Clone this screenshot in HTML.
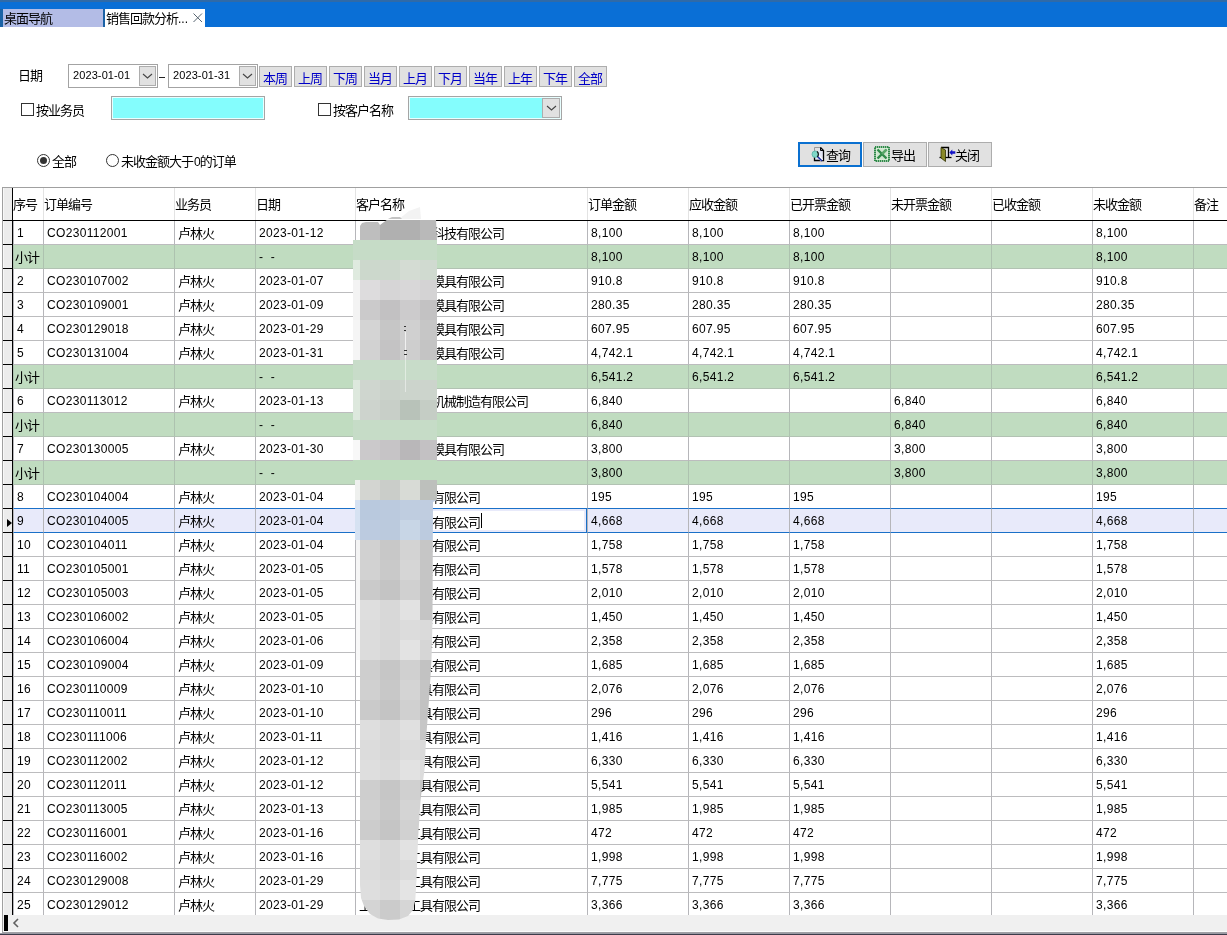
<!DOCTYPE html>
<html lang="zh-CN">
<head>
<meta charset="utf-8">
<title>销售回款分析</title>
<style>
*{box-sizing:border-box;margin:0;padding:0}
html,body{width:1227px;height:935px;overflow:hidden;background:#fff}
body{will-change:transform;position:relative;font-family:"Liberation Sans","Noto Sans CJK SC",sans-serif;font-size:12px;color:#000;line-height:1}
.abs{position:absolute}
#topbar{position:absolute;left:0;top:0;width:1227px;height:27px;background:#0a6fd6}
#topbar .edge{position:absolute;left:0;top:0;width:100%;height:2px;background:#2f6aa8}
#topbar .g1{position:absolute;left:0;top:9px;width:3px;height:18px;background:#1a62a6}
#topbar .g2{position:absolute;left:103px;top:9px;width:2px;height:18px;background:#1a62a6}
.tab{position:absolute;top:9px;height:18px;font-size:13px;letter-spacing:-1px;line-height:19px;padding-left:1px;white-space:nowrap}
#tab1{left:3px;width:100px;background:#b3bce6}
#tab2{left:105px;width:100px;background:#fff}
#tab2 svg{position:absolute;left:88px;top:4px}
.lbl{position:absolute;font-size:13px;letter-spacing:-1px;line-height:14px;white-space:nowrap}
.dt{position:absolute;top:64px;width:90px;height:24px;border:1px solid #a3a3a3;background:#fff;font-size:11px;letter-spacing:0.1px;line-height:21px;padding-left:4px}
.dt .dd{position:absolute;right:1px;top:1px;width:17px;height:20px;background:#e1e1e1;border:1px solid #adadad}
.dt .dd svg{position:absolute;left:2px;top:6px}
.qb{position:absolute;top:66px;width:33px;height:21px;background:#e1e1e1;border:1px solid #adadad;color:#0000c8;font-size:13px;letter-spacing:-1px;line-height:24px;text-align:center;white-space:nowrap;padding-right:1px}
.chk{position:absolute;width:13px;height:13px;border:1px solid #333;background:#fff}
.cy{position:absolute;top:96px;height:24px;background:#84fdfd;border:1px solid #a5a5a5;box-shadow:inset 0 0 0 1px #e8ffff}
.rad{position:absolute;top:154px;width:13px;height:13px;border:1px solid #333;border-radius:50%;background:#fff}
.rad.on:after{content:"";position:absolute;left:2px;top:2px;width:7px;height:7px;border-radius:50%;background:#333}
.btn{position:absolute;top:142px;height:25px;background:#e1e1e1;border:1px solid #adadad;font-size:13px;letter-spacing:-1px;line-height:24px;white-space:nowrap}
.btn span{position:absolute;top:1px}
.btn svg{position:absolute}
/* grid */
#grid{position:absolute;left:0;top:0;width:1227px;height:935px;overflow:hidden;pointer-events:none}
.hdr{position:absolute;left:13px;top:188px;width:1214px;height:33px;border-bottom:1px solid #000;background:#fff;z-index:2}
.hc{position:absolute;top:0;height:32px;line-height:33px;font-size:13px;letter-spacing:-1px;border-left:1px solid #e3e3e3;white-space:nowrap;overflow:hidden;margin-left:-13px}
.row{position:absolute;left:0;width:1227px;height:24px}
.row .c{position:absolute;top:0;height:24px;border-left:1px solid #b6b6ba;border-bottom:1px solid #bcbcbe;font-size:12px;letter-spacing:0.33px;line-height:24px;padding-left:3px;white-space:nowrap;overflow:hidden}
.row.sub .c{background:#c0dcc0;border-left-color:#adc2af;border-bottom-color:#b2c2b3}
.row .c b{font-weight:normal;font-size:13px;letter-spacing:-1px;position:relative;top:1px}
.hc:first-child{border-left:none;padding-left:0}
.row .c.z{padding-left:1px}
.tk{position:absolute;left:3px;top:23px;width:9px;height:1px;background:#000}
.row.sel{margin-top:-1px;height:25px}
.row.sel .tk{top:24px}
.row.sel .c{height:25px;background:#e8eafa;border-top:1px solid #1a70c8;border-bottom:1px solid #1a70c8}
.row.sel .c.ed{background:#fff;border:1px solid #1a70c8;box-shadow:inset 0 0 0 2px #e8eafa}
.row.sel .c.ed span{top:2px}
.cur{position:absolute;left:125px;top:4px;width:1px;height:15px;background:#000}
.mk{position:absolute;left:7px;top:11px;width:0;height:0;border-left:5px solid #000;border-top:4px solid transparent;border-bottom:4px solid transparent}
.c.nm span{position:absolute;top:1px;font-size:13px;letter-spacing:-1px}
</style>
</head>
<body>
<div id="topbar"><div class="edge"></div><div class="g1"></div><div class="g2"></div>
<div class="tab" id="tab1">桌面导航</div>
<div class="tab" id="tab2">销售回款分析<span style="letter-spacing:0;font-size:12px">...</span><svg width="10" height="10" viewBox="0 0 10 10"><path d="M0.5 0.5L9 9M9 0.5L0.5 9" stroke="#566470" stroke-width="1" fill="none"/></svg></div>
</div>

<div class="lbl" style="left:18px;top:69px">日期</div>
<div class="dt" style="left:68px">2023-01-01<div class="dd"><svg width="11" height="6" viewBox="0 0 11 6"><path d="M1 1L5.5 5L10 1" stroke="#444" stroke-width="1.1" fill="none"/></svg></div></div>
<div class="abs" style="left:159px;top:77px;width:6px;height:1px;background:#222"></div>
<div class="dt" style="left:168px">2023-01-31<div class="dd"><svg width="11" height="6" viewBox="0 0 11 6"><path d="M1 1L5.5 5L10 1" stroke="#444" stroke-width="1.1" fill="none"/></svg></div></div>
<div class="qb" style="left:259px">本周</div>
<div class="qb" style="left:294px">上周</div>
<div class="qb" style="left:329px">下周</div>
<div class="qb" style="left:364px">当月</div>
<div class="qb" style="left:399px">上月</div>
<div class="qb" style="left:434px">下月</div>
<div class="qb" style="left:469px">当年</div>
<div class="qb" style="left:504px">上年</div>
<div class="qb" style="left:539px">下年</div>
<div class="qb" style="left:574px">全部</div>

<div class="chk" style="left:21px;top:103px"></div>
<div class="lbl" style="left:36px;top:104px">按业务员</div>
<div class="cy" style="left:111px;width:154px"></div>
<div class="chk" style="left:318px;top:103px"></div>
<div class="lbl" style="left:333px;top:104px">按客户名称</div>
<div class="cy" style="left:408px;width:154px"><div class="dd" style="position:absolute;right:1px;top:1px;width:18px;height:20px;background:#e1e1e1;border:1px solid #adadad"><svg style="position:absolute;left:3px;top:6px" width="11" height="6" viewBox="0 0 11 6"><path d="M1 1L5.5 5L10 1" stroke="#444" stroke-width="1.1" fill="none"/></svg></div></div>

<div class="rad on" style="left:37px"></div>
<div class="lbl" style="left:52px;top:155px">全部</div>
<div class="rad" style="left:106px"></div>
<div class="lbl" style="left:121px;top:155px">未收金额大于<span style="letter-spacing:0;font-size:12px;margin:0 -1px 0 1px">0</span>的订单</div>

<div class="btn" style="left:798px;width:64px;border:2px solid #0a70d0;line-height:22px">
<svg style="left:10px;top:2px" width="16" height="17" viewBox="0 0 16 17"><path d="M4.5 7V1.5H10.5" stroke="#9a9a9a" fill="none"/><path d="M10.5 1.5L13.5 4.5V14.5H4.5V11" stroke="#000" stroke-width="1.3" fill="#e4e6f4"/><path d="M10.5 1.5V4.5H13.5" stroke="#000" fill="none"/><path d="M8 10L12 14.5" stroke="#fff" stroke-width="3"/><path d="M7.5 10.5L12 15" stroke="#1828a0" stroke-width="1.6"/><circle cx="5.2" cy="8.2" r="3.2" fill="#80d8c8" stroke="#58b0a8" stroke-width="0.8"/><path d="M7 5.6A3.3 3.3 0 0 1 7.2 10.8" stroke="#111" stroke-width="1.2" fill="none"/></svg>
<span style="left:26px;top:1px">查询</span></div>
<div class="btn" style="left:863px;width:64px">
<svg style="left:10px;top:3px" width="16" height="16" viewBox="0 0 16 16"><rect x="1" y="1" width="14" height="14" fill="#d8ecd8" stroke="#2e8a48" stroke-width="2" stroke-dasharray="1.4 0.6"/><rect x="3" y="3" width="10" height="10" fill="#cfe6cf"/><path d="M3.5 3.5L12.5 12.5M12.5 3.5L3.5 12.5" stroke="#2e8a48" stroke-width="2.4"/><path d="M12.5 3.5L8 8" stroke="#5aa86a" stroke-width="2.4"/></svg>
<span style="left:27px">导出</span></div>
<div class="btn" style="left:928px;width:64px">
<svg style="left:10px;top:3px" width="17" height="16" viewBox="0 0 17 16"><path d="M2 1.5H9.5V11.5" stroke="#000" stroke-width="1.3" fill="none"/><path d="M0.5 11.5H12.5" stroke="#000" stroke-width="1.3"/><path d="M2 1.5L6.5 4V15.5L2 12Z" fill="#8a8a28" stroke="#303000" stroke-width="0.8"/><path d="M10.3 6.5L13.3 3.5V5.3H16.3V7.7H13.3V9.5Z" fill="#1414c8"/></svg>
<span style="left:26px">关闭</span></div>

<!-- grid frame -->
<div class="abs" style="left:2px;top:187px;width:1225px;height:1px;background:#a0a0a0"></div>
<div class="abs" style="left:2px;top:187px;width:1px;height:746px;background:#a0a0a0"></div>
<div class="abs" style="left:3px;top:188px;width:9px;height:727px;background:#ececec;box-shadow:inset 1px 0 0 #f8f8f8"></div>
<div class="abs" style="left:3px;top:220px;width:10px;height:1px;background:#000"></div>
<div id="grid">
<div class="hdr">
<div class="hc" style="left:13px;width:30px">序号</div>
<div class="hc" style="left:43px;width:131px">订单编号</div>
<div class="hc" style="left:174px;width:81px">业务员</div>
<div class="hc" style="left:255px;width:100px">日期</div>
<div class="hc" style="left:355px;width:232px">客户名称</div>
<div class="hc" style="left:587px;width:101px">订单金额</div>
<div class="hc" style="left:688px;width:101px">应收金额</div>
<div class="hc" style="left:789px;width:101px">已开票金额</div>
<div class="hc" style="left:890px;width:101px">未开票金额</div>
<div class="hc" style="left:991px;width:101px">已收金额</div>
<div class="hc" style="left:1092px;width:101px">未收金额</div>
<div class="hc" style="left:1193px;width:101px">备注</div>
</div>
<div class="row" style="top:221px"><i class="tk"></i>
<div class="c" style="left:13px;width:30px">1</div>
<div class="c" style="left:43px;width:131px">CO230112001</div>
<div class="c" style="left:174px;width:81px"><b>卢林火</b></div>
<div class="c" style="left:255px;width:100px">2023-01-12</div>
<div class="c nm" style="left:355px;width:232px"><span style="left:76px">科技有限公司</span></div>
<div class="c" style="left:587px;width:101px">8,100</div>
<div class="c" style="left:688px;width:101px">8,100</div>
<div class="c" style="left:789px;width:101px">8,100</div>
<div class="c" style="left:890px;width:101px"></div>
<div class="c" style="left:991px;width:101px"></div>
<div class="c" style="left:1092px;width:101px">8,100</div>
<div class="c" style="left:1193px;width:101px"></div>
</div>
<div class="row sub" style="top:245px"><i class="tk"></i>
<div class="c z" style="left:13px;width:30px"><b>小计</b></div>
<div class="c" style="left:43px;width:131px"></div>
<div class="c" style="left:174px;width:81px"></div>
<div class="c" style="left:255px;width:100px">-&nbsp;&nbsp;-</div>
<div class="c" style="left:355px;width:232px"></div>
<div class="c" style="left:587px;width:101px">8,100</div>
<div class="c" style="left:688px;width:101px">8,100</div>
<div class="c" style="left:789px;width:101px">8,100</div>
<div class="c" style="left:890px;width:101px"></div>
<div class="c" style="left:991px;width:101px"></div>
<div class="c" style="left:1092px;width:101px">8,100</div>
<div class="c" style="left:1193px;width:101px"></div>
</div>
<div class="row" style="top:269px"><i class="tk"></i>
<div class="c" style="left:13px;width:30px">2</div>
<div class="c" style="left:43px;width:131px">CO230107002</div>
<div class="c" style="left:174px;width:81px"><b>卢林火</b></div>
<div class="c" style="left:255px;width:100px">2023-01-07</div>
<div class="c nm" style="left:355px;width:232px"><span style="left:76px">模具有限公司</span></div>
<div class="c" style="left:587px;width:101px">910.8</div>
<div class="c" style="left:688px;width:101px">910.8</div>
<div class="c" style="left:789px;width:101px">910.8</div>
<div class="c" style="left:890px;width:101px"></div>
<div class="c" style="left:991px;width:101px"></div>
<div class="c" style="left:1092px;width:101px">910.8</div>
<div class="c" style="left:1193px;width:101px"></div>
</div>
<div class="row" style="top:293px"><i class="tk"></i>
<div class="c" style="left:13px;width:30px">3</div>
<div class="c" style="left:43px;width:131px">CO230109001</div>
<div class="c" style="left:174px;width:81px"><b>卢林火</b></div>
<div class="c" style="left:255px;width:100px">2023-01-09</div>
<div class="c nm" style="left:355px;width:232px"><span style="left:76px">模具有限公司</span></div>
<div class="c" style="left:587px;width:101px">280.35</div>
<div class="c" style="left:688px;width:101px">280.35</div>
<div class="c" style="left:789px;width:101px">280.35</div>
<div class="c" style="left:890px;width:101px"></div>
<div class="c" style="left:991px;width:101px"></div>
<div class="c" style="left:1092px;width:101px">280.35</div>
<div class="c" style="left:1193px;width:101px"></div>
</div>
<div class="row" style="top:317px"><i class="tk"></i>
<div class="c" style="left:13px;width:30px">4</div>
<div class="c" style="left:43px;width:131px">CO230129018</div>
<div class="c" style="left:174px;width:81px"><b>卢林火</b></div>
<div class="c" style="left:255px;width:100px">2023-01-29</div>
<div class="c nm" style="left:355px;width:232px"><span style="left:76px">模具有限公司</span></div>
<div class="c" style="left:587px;width:101px">607.95</div>
<div class="c" style="left:688px;width:101px">607.95</div>
<div class="c" style="left:789px;width:101px">607.95</div>
<div class="c" style="left:890px;width:101px"></div>
<div class="c" style="left:991px;width:101px"></div>
<div class="c" style="left:1092px;width:101px">607.95</div>
<div class="c" style="left:1193px;width:101px"></div>
</div>
<div class="row" style="top:341px"><i class="tk"></i>
<div class="c" style="left:13px;width:30px">5</div>
<div class="c" style="left:43px;width:131px">CO230131004</div>
<div class="c" style="left:174px;width:81px"><b>卢林火</b></div>
<div class="c" style="left:255px;width:100px">2023-01-31</div>
<div class="c nm" style="left:355px;width:232px"><span style="left:76px">模具有限公司</span></div>
<div class="c" style="left:587px;width:101px">4,742.1</div>
<div class="c" style="left:688px;width:101px">4,742.1</div>
<div class="c" style="left:789px;width:101px">4,742.1</div>
<div class="c" style="left:890px;width:101px"></div>
<div class="c" style="left:991px;width:101px"></div>
<div class="c" style="left:1092px;width:101px">4,742.1</div>
<div class="c" style="left:1193px;width:101px"></div>
</div>
<div class="row sub" style="top:365px"><i class="tk"></i>
<div class="c z" style="left:13px;width:30px"><b>小计</b></div>
<div class="c" style="left:43px;width:131px"></div>
<div class="c" style="left:174px;width:81px"></div>
<div class="c" style="left:255px;width:100px">-&nbsp;&nbsp;-</div>
<div class="c" style="left:355px;width:232px"></div>
<div class="c" style="left:587px;width:101px">6,541.2</div>
<div class="c" style="left:688px;width:101px">6,541.2</div>
<div class="c" style="left:789px;width:101px">6,541.2</div>
<div class="c" style="left:890px;width:101px"></div>
<div class="c" style="left:991px;width:101px"></div>
<div class="c" style="left:1092px;width:101px">6,541.2</div>
<div class="c" style="left:1193px;width:101px"></div>
</div>
<div class="row" style="top:389px"><i class="tk"></i>
<div class="c" style="left:13px;width:30px">6</div>
<div class="c" style="left:43px;width:131px">CO230113012</div>
<div class="c" style="left:174px;width:81px"><b>卢林火</b></div>
<div class="c" style="left:255px;width:100px">2023-01-13</div>
<div class="c nm" style="left:355px;width:232px"><span style="left:76px">机械制造有限公司</span></div>
<div class="c" style="left:587px;width:101px">6,840</div>
<div class="c" style="left:688px;width:101px"></div>
<div class="c" style="left:789px;width:101px"></div>
<div class="c" style="left:890px;width:101px">6,840</div>
<div class="c" style="left:991px;width:101px"></div>
<div class="c" style="left:1092px;width:101px">6,840</div>
<div class="c" style="left:1193px;width:101px"></div>
</div>
<div class="row sub" style="top:413px"><i class="tk"></i>
<div class="c z" style="left:13px;width:30px"><b>小计</b></div>
<div class="c" style="left:43px;width:131px"></div>
<div class="c" style="left:174px;width:81px"></div>
<div class="c" style="left:255px;width:100px">-&nbsp;&nbsp;-</div>
<div class="c" style="left:355px;width:232px"></div>
<div class="c" style="left:587px;width:101px">6,840</div>
<div class="c" style="left:688px;width:101px"></div>
<div class="c" style="left:789px;width:101px"></div>
<div class="c" style="left:890px;width:101px">6,840</div>
<div class="c" style="left:991px;width:101px"></div>
<div class="c" style="left:1092px;width:101px">6,840</div>
<div class="c" style="left:1193px;width:101px"></div>
</div>
<div class="row" style="top:437px"><i class="tk"></i>
<div class="c" style="left:13px;width:30px">7</div>
<div class="c" style="left:43px;width:131px">CO230130005</div>
<div class="c" style="left:174px;width:81px"><b>卢林火</b></div>
<div class="c" style="left:255px;width:100px">2023-01-30</div>
<div class="c nm" style="left:355px;width:232px"><span style="left:76px">模具有限公司</span></div>
<div class="c" style="left:587px;width:101px">3,800</div>
<div class="c" style="left:688px;width:101px"></div>
<div class="c" style="left:789px;width:101px"></div>
<div class="c" style="left:890px;width:101px">3,800</div>
<div class="c" style="left:991px;width:101px"></div>
<div class="c" style="left:1092px;width:101px">3,800</div>
<div class="c" style="left:1193px;width:101px"></div>
</div>
<div class="row sub" style="top:461px"><i class="tk"></i>
<div class="c z" style="left:13px;width:30px"><b>小计</b></div>
<div class="c" style="left:43px;width:131px"></div>
<div class="c" style="left:174px;width:81px"></div>
<div class="c" style="left:255px;width:100px">-&nbsp;&nbsp;-</div>
<div class="c" style="left:355px;width:232px"></div>
<div class="c" style="left:587px;width:101px">3,800</div>
<div class="c" style="left:688px;width:101px"></div>
<div class="c" style="left:789px;width:101px"></div>
<div class="c" style="left:890px;width:101px">3,800</div>
<div class="c" style="left:991px;width:101px"></div>
<div class="c" style="left:1092px;width:101px">3,800</div>
<div class="c" style="left:1193px;width:101px"></div>
</div>
<div class="row" style="top:485px"><i class="tk"></i>
<div class="c" style="left:13px;width:30px">8</div>
<div class="c" style="left:43px;width:131px">CO230104004</div>
<div class="c" style="left:174px;width:81px"><b>卢林火</b></div>
<div class="c" style="left:255px;width:100px">2023-01-04</div>
<div class="c nm" style="left:355px;width:232px"><span style="left:52px">工具有限公司</span></div>
<div class="c" style="left:587px;width:101px">195</div>
<div class="c" style="left:688px;width:101px">195</div>
<div class="c" style="left:789px;width:101px">195</div>
<div class="c" style="left:890px;width:101px"></div>
<div class="c" style="left:991px;width:101px"></div>
<div class="c" style="left:1092px;width:101px">195</div>
<div class="c" style="left:1193px;width:101px"></div>
</div>
<div class="row sel" style="top:509px"><i class="tk"></i>
<i class="mk"></i>
<div class="c" style="left:13px;width:30px">9</div>
<div class="c" style="left:43px;width:131px">CO230104005</div>
<div class="c" style="left:174px;width:81px"><b>卢林火</b></div>
<div class="c" style="left:255px;width:100px">2023-01-04</div>
<div class="c nm ed" style="left:355px;width:232px"><span style="left:52px">工具有限公司</span><i class="cur"></i></div>
<div class="c" style="left:587px;width:101px">4,668</div>
<div class="c" style="left:688px;width:101px">4,668</div>
<div class="c" style="left:789px;width:101px">4,668</div>
<div class="c" style="left:890px;width:101px"></div>
<div class="c" style="left:991px;width:101px"></div>
<div class="c" style="left:1092px;width:101px">4,668</div>
<div class="c" style="left:1193px;width:101px"></div>
</div>
<div class="row" style="top:533px"><i class="tk"></i>
<div class="c" style="left:13px;width:30px">10</div>
<div class="c" style="left:43px;width:131px">CO230104011</div>
<div class="c" style="left:174px;width:81px"><b>卢林火</b></div>
<div class="c" style="left:255px;width:100px">2023-01-04</div>
<div class="c nm" style="left:355px;width:232px"><span style="left:52px">工具有限公司</span></div>
<div class="c" style="left:587px;width:101px">1,758</div>
<div class="c" style="left:688px;width:101px">1,758</div>
<div class="c" style="left:789px;width:101px">1,758</div>
<div class="c" style="left:890px;width:101px"></div>
<div class="c" style="left:991px;width:101px"></div>
<div class="c" style="left:1092px;width:101px">1,758</div>
<div class="c" style="left:1193px;width:101px"></div>
</div>
<div class="row" style="top:557px"><i class="tk"></i>
<div class="c" style="left:13px;width:30px">11</div>
<div class="c" style="left:43px;width:131px">CO230105001</div>
<div class="c" style="left:174px;width:81px"><b>卢林火</b></div>
<div class="c" style="left:255px;width:100px">2023-01-05</div>
<div class="c nm" style="left:355px;width:232px"><span style="left:52px">工具有限公司</span></div>
<div class="c" style="left:587px;width:101px">1,578</div>
<div class="c" style="left:688px;width:101px">1,578</div>
<div class="c" style="left:789px;width:101px">1,578</div>
<div class="c" style="left:890px;width:101px"></div>
<div class="c" style="left:991px;width:101px"></div>
<div class="c" style="left:1092px;width:101px">1,578</div>
<div class="c" style="left:1193px;width:101px"></div>
</div>
<div class="row" style="top:581px"><i class="tk"></i>
<div class="c" style="left:13px;width:30px">12</div>
<div class="c" style="left:43px;width:131px">CO230105003</div>
<div class="c" style="left:174px;width:81px"><b>卢林火</b></div>
<div class="c" style="left:255px;width:100px">2023-01-05</div>
<div class="c nm" style="left:355px;width:232px"><span style="left:52px">工具有限公司</span></div>
<div class="c" style="left:587px;width:101px">2,010</div>
<div class="c" style="left:688px;width:101px">2,010</div>
<div class="c" style="left:789px;width:101px">2,010</div>
<div class="c" style="left:890px;width:101px"></div>
<div class="c" style="left:991px;width:101px"></div>
<div class="c" style="left:1092px;width:101px">2,010</div>
<div class="c" style="left:1193px;width:101px"></div>
</div>
<div class="row" style="top:605px"><i class="tk"></i>
<div class="c" style="left:13px;width:30px">13</div>
<div class="c" style="left:43px;width:131px">CO230106002</div>
<div class="c" style="left:174px;width:81px"><b>卢林火</b></div>
<div class="c" style="left:255px;width:100px">2023-01-05</div>
<div class="c nm" style="left:355px;width:232px"><span style="left:52px">工具有限公司</span></div>
<div class="c" style="left:587px;width:101px">1,450</div>
<div class="c" style="left:688px;width:101px">1,450</div>
<div class="c" style="left:789px;width:101px">1,450</div>
<div class="c" style="left:890px;width:101px"></div>
<div class="c" style="left:991px;width:101px"></div>
<div class="c" style="left:1092px;width:101px">1,450</div>
<div class="c" style="left:1193px;width:101px"></div>
</div>
<div class="row" style="top:629px"><i class="tk"></i>
<div class="c" style="left:13px;width:30px">14</div>
<div class="c" style="left:43px;width:131px">CO230106004</div>
<div class="c" style="left:174px;width:81px"><b>卢林火</b></div>
<div class="c" style="left:255px;width:100px">2023-01-06</div>
<div class="c nm" style="left:355px;width:232px"><span style="left:52px">工具有限公司</span></div>
<div class="c" style="left:587px;width:101px">2,358</div>
<div class="c" style="left:688px;width:101px">2,358</div>
<div class="c" style="left:789px;width:101px">2,358</div>
<div class="c" style="left:890px;width:101px"></div>
<div class="c" style="left:991px;width:101px"></div>
<div class="c" style="left:1092px;width:101px">2,358</div>
<div class="c" style="left:1193px;width:101px"></div>
</div>
<div class="row" style="top:653px"><i class="tk"></i>
<div class="c" style="left:13px;width:30px">15</div>
<div class="c" style="left:43px;width:131px">CO230109004</div>
<div class="c" style="left:174px;width:81px"><b>卢林火</b></div>
<div class="c" style="left:255px;width:100px">2023-01-09</div>
<div class="c nm" style="left:355px;width:232px"><span style="left:52px">工具有限公司</span></div>
<div class="c" style="left:587px;width:101px">1,685</div>
<div class="c" style="left:688px;width:101px">1,685</div>
<div class="c" style="left:789px;width:101px">1,685</div>
<div class="c" style="left:890px;width:101px"></div>
<div class="c" style="left:991px;width:101px"></div>
<div class="c" style="left:1092px;width:101px">1,685</div>
<div class="c" style="left:1193px;width:101px"></div>
</div>
<div class="row" style="top:677px"><i class="tk"></i>
<div class="c" style="left:13px;width:30px">16</div>
<div class="c" style="left:43px;width:131px">CO230110009</div>
<div class="c" style="left:174px;width:81px"><b>卢林火</b></div>
<div class="c" style="left:255px;width:100px">2023-01-10</div>
<div class="c nm" style="left:355px;width:232px"><span style="left:52px">工具有限公司</span></div>
<div class="c" style="left:587px;width:101px">2,076</div>
<div class="c" style="left:688px;width:101px">2,076</div>
<div class="c" style="left:789px;width:101px">2,076</div>
<div class="c" style="left:890px;width:101px"></div>
<div class="c" style="left:991px;width:101px"></div>
<div class="c" style="left:1092px;width:101px">2,076</div>
<div class="c" style="left:1193px;width:101px"></div>
</div>
<div class="row" style="top:701px"><i class="tk"></i>
<div class="c" style="left:13px;width:30px">17</div>
<div class="c" style="left:43px;width:131px">CO230110011</div>
<div class="c" style="left:174px;width:81px"><b>卢林火</b></div>
<div class="c" style="left:255px;width:100px">2023-01-10</div>
<div class="c nm" style="left:355px;width:232px"><span style="left:52px">工具有限公司</span></div>
<div class="c" style="left:587px;width:101px">296</div>
<div class="c" style="left:688px;width:101px">296</div>
<div class="c" style="left:789px;width:101px">296</div>
<div class="c" style="left:890px;width:101px"></div>
<div class="c" style="left:991px;width:101px"></div>
<div class="c" style="left:1092px;width:101px">296</div>
<div class="c" style="left:1193px;width:101px"></div>
</div>
<div class="row" style="top:725px"><i class="tk"></i>
<div class="c" style="left:13px;width:30px">18</div>
<div class="c" style="left:43px;width:131px">CO230111006</div>
<div class="c" style="left:174px;width:81px"><b>卢林火</b></div>
<div class="c" style="left:255px;width:100px">2023-01-11</div>
<div class="c nm" style="left:355px;width:232px"><span style="left:52px">工具有限公司</span></div>
<div class="c" style="left:587px;width:101px">1,416</div>
<div class="c" style="left:688px;width:101px">1,416</div>
<div class="c" style="left:789px;width:101px">1,416</div>
<div class="c" style="left:890px;width:101px"></div>
<div class="c" style="left:991px;width:101px"></div>
<div class="c" style="left:1092px;width:101px">1,416</div>
<div class="c" style="left:1193px;width:101px"></div>
</div>
<div class="row" style="top:749px"><i class="tk"></i>
<div class="c" style="left:13px;width:30px">19</div>
<div class="c" style="left:43px;width:131px">CO230112002</div>
<div class="c" style="left:174px;width:81px"><b>卢林火</b></div>
<div class="c" style="left:255px;width:100px">2023-01-12</div>
<div class="c nm" style="left:355px;width:232px"><span style="left:52px">工具有限公司</span></div>
<div class="c" style="left:587px;width:101px">6,330</div>
<div class="c" style="left:688px;width:101px">6,330</div>
<div class="c" style="left:789px;width:101px">6,330</div>
<div class="c" style="left:890px;width:101px"></div>
<div class="c" style="left:991px;width:101px"></div>
<div class="c" style="left:1092px;width:101px">6,330</div>
<div class="c" style="left:1193px;width:101px"></div>
</div>
<div class="row" style="top:773px"><i class="tk"></i>
<div class="c" style="left:13px;width:30px">20</div>
<div class="c" style="left:43px;width:131px">CO230112011</div>
<div class="c" style="left:174px;width:81px"><b>卢林火</b></div>
<div class="c" style="left:255px;width:100px">2023-01-12</div>
<div class="c nm" style="left:355px;width:232px"><span style="left:52px">工具有限公司</span></div>
<div class="c" style="left:587px;width:101px">5,541</div>
<div class="c" style="left:688px;width:101px">5,541</div>
<div class="c" style="left:789px;width:101px">5,541</div>
<div class="c" style="left:890px;width:101px"></div>
<div class="c" style="left:991px;width:101px"></div>
<div class="c" style="left:1092px;width:101px">5,541</div>
<div class="c" style="left:1193px;width:101px"></div>
</div>
<div class="row" style="top:797px"><i class="tk"></i>
<div class="c" style="left:13px;width:30px">21</div>
<div class="c" style="left:43px;width:131px">CO230113005</div>
<div class="c" style="left:174px;width:81px"><b>卢林火</b></div>
<div class="c" style="left:255px;width:100px">2023-01-13</div>
<div class="c nm" style="left:355px;width:232px"><span style="left:52px">工具有限公司</span></div>
<div class="c" style="left:587px;width:101px">1,985</div>
<div class="c" style="left:688px;width:101px">1,985</div>
<div class="c" style="left:789px;width:101px">1,985</div>
<div class="c" style="left:890px;width:101px"></div>
<div class="c" style="left:991px;width:101px"></div>
<div class="c" style="left:1092px;width:101px">1,985</div>
<div class="c" style="left:1193px;width:101px"></div>
</div>
<div class="row" style="top:821px"><i class="tk"></i>
<div class="c" style="left:13px;width:30px">22</div>
<div class="c" style="left:43px;width:131px">CO230116001</div>
<div class="c" style="left:174px;width:81px"><b>卢林火</b></div>
<div class="c" style="left:255px;width:100px">2023-01-16</div>
<div class="c nm" style="left:355px;width:232px"><span style="left:52px">工具有限公司</span></div>
<div class="c" style="left:587px;width:101px">472</div>
<div class="c" style="left:688px;width:101px">472</div>
<div class="c" style="left:789px;width:101px">472</div>
<div class="c" style="left:890px;width:101px"></div>
<div class="c" style="left:991px;width:101px"></div>
<div class="c" style="left:1092px;width:101px">472</div>
<div class="c" style="left:1193px;width:101px"></div>
</div>
<div class="row" style="top:845px"><i class="tk"></i>
<div class="c" style="left:13px;width:30px">23</div>
<div class="c" style="left:43px;width:131px">CO230116002</div>
<div class="c" style="left:174px;width:81px"><b>卢林火</b></div>
<div class="c" style="left:255px;width:100px">2023-01-16</div>
<div class="c nm" style="left:355px;width:232px"><span style="left:52px">工具有限公司</span></div>
<div class="c" style="left:587px;width:101px">1,998</div>
<div class="c" style="left:688px;width:101px">1,998</div>
<div class="c" style="left:789px;width:101px">1,998</div>
<div class="c" style="left:890px;width:101px"></div>
<div class="c" style="left:991px;width:101px"></div>
<div class="c" style="left:1092px;width:101px">1,998</div>
<div class="c" style="left:1193px;width:101px"></div>
</div>
<div class="row" style="top:869px"><i class="tk"></i>
<div class="c" style="left:13px;width:30px">24</div>
<div class="c" style="left:43px;width:131px">CO230129008</div>
<div class="c" style="left:174px;width:81px"><b>卢林火</b></div>
<div class="c" style="left:255px;width:100px">2023-01-29</div>
<div class="c nm" style="left:355px;width:232px"><span style="left:52px">工具有限公司</span></div>
<div class="c" style="left:587px;width:101px">7,775</div>
<div class="c" style="left:688px;width:101px">7,775</div>
<div class="c" style="left:789px;width:101px">7,775</div>
<div class="c" style="left:890px;width:101px"></div>
<div class="c" style="left:991px;width:101px"></div>
<div class="c" style="left:1092px;width:101px">7,775</div>
<div class="c" style="left:1193px;width:101px"></div>
</div>
<div class="row" style="top:893px"><i class="tk"></i>
<div class="c" style="left:13px;width:30px">25</div>
<div class="c" style="left:43px;width:131px">CO230129012</div>
<div class="c" style="left:174px;width:81px"><b>卢林火</b></div>
<div class="c" style="left:255px;width:100px">2023-01-29</div>
<div class="c nm" style="left:355px;width:232px"><span style="left:3px">上</span><span style="left:52px">工具有限公司</span></div>
<div class="c" style="left:587px;width:101px">3,366</div>
<div class="c" style="left:688px;width:101px">3,366</div>
<div class="c" style="left:789px;width:101px">3,366</div>
<div class="c" style="left:890px;width:101px"></div>
<div class="c" style="left:991px;width:101px"></div>
<div class="c" style="left:1092px;width:101px">3,366</div>
<div class="c" style="left:1193px;width:101px"></div>
</div>
</div><!-- bottom scrollbar -->
<div class="abs" style="left:3px;top:915px;width:1224px;height:16px;background:#f0f0f0"></div>
<div class="abs" style="left:3px;top:931px;width:1224px;height:1px;background:#fbfbfb"></div>
<div class="abs" style="left:4px;top:915px;width:4px;height:16px;background:#000"></div>
<svg class="abs" style="left:12px;top:918px" width="8" height="10" viewBox="0 0 8 10"><path d="M6 1L2 5L6 9" stroke="#606060" stroke-width="1.6" fill="none"/></svg>
<div class="abs" style="left:2px;top:932px;width:1225px;height:1px;background:#a0a0a4"></div>
<div class="abs" style="left:0;top:933px;width:1227px;height:1px;background:#9a9aa4"></div>
<div class="abs" style="left:0;top:934px;width:1227px;height:1px;background:#3c3c4a"></div>
<svg class="abs" style="left:345px;top:200px;z-index:4" width="100" height="725" viewBox="345 200 100 725" >
<defs><clipPath id="mz"><polygon points="360,226 362,223 366,222 378,222 380,225 388,219 436,219 437,240 437,500 433,502 432.5,620 431.5,660 429,700 426,740 424.5,770 420.5,800 418,840 416.5,880 415.3,900 413,910 408,916 399,919.5 388,920 378,918.5 370,914 364,906 361,898 360,885"/></clipPath></defs>
<polygon points="399,219 409,211 420,207 421,219" fill="#f3f3f3"/>
<polygon points="388,219 392,217 400,217 402,219" fill="#c4c4c4"/>
<rect x="353" y="240" width="7" height="20" fill="#c6dcc7"/>
<rect x="353" y="260" width="7" height="20" fill="#dfeadf"/>
<rect x="353" y="280" width="7" height="20" fill="#f3f3f3"/>
<rect x="353" y="300" width="7" height="20" fill="#f3f3f3"/>
<rect x="353" y="320" width="7" height="20" fill="#f5f5f5"/>
<rect x="353" y="340" width="7" height="20" fill="#f5f5f5"/>
<rect x="353" y="360" width="7" height="20" fill="#c8dcc9"/>
<rect x="353" y="380" width="7" height="20" fill="#dde8dd"/>
<rect x="353" y="400" width="7" height="20" fill="#dde8dd"/>
<rect x="353" y="420" width="7" height="20" fill="#c6dcc7"/>
<rect x="353" y="440" width="7" height="20" fill="#f8f8f8"/>
<rect x="353" y="460" width="7" height="20" fill="#c0dcc0"/>
<rect x="355" y="480" width="5" height="20" fill="#eef0ee"/>
<rect x="355" y="500" width="5" height="20" fill="#d6e2f2"/>
<rect x="355" y="520" width="5" height="20" fill="#d6e2f2"/>
<rect x="356" y="540" width="4" height="20" fill="#f4f4f4"/>
<rect x="356" y="560" width="4" height="20" fill="#f6f6f6"/>
<rect x="356" y="580" width="4" height="20" fill="#f6f6f6"/>
<rect x="356" y="600" width="4" height="20" fill="#f8f8f8"/>
<rect x="356" y="620" width="4" height="20" fill="#f8f8f8"/>
<rect x="356" y="640" width="4" height="20" fill="#f8f8f8"/>
<g clip-path="url(#mz)">
<rect x="360" y="220" width="20" height="20" fill="#bebebe"/>
<rect x="380" y="220" width="20" height="20" fill="#b0b0b0"/>
<rect x="400" y="220" width="20" height="20" fill="#b0b0b0"/>
<rect x="420" y="220" width="20" height="20" fill="#b9b9b9"/>
<rect x="360" y="240" width="20" height="20" fill="#c6dcc7"/>
<rect x="380" y="240" width="20" height="20" fill="#c6dcc7"/>
<rect x="400" y="240" width="20" height="20" fill="#c6dcc7"/>
<rect x="420" y="240" width="20" height="20" fill="#c6dcc7"/>
<rect x="360" y="260" width="20" height="20" fill="#ccd8cc"/>
<rect x="380" y="260" width="20" height="20" fill="#cdd8cd"/>
<rect x="400" y="260" width="20" height="20" fill="#d4dcd3"/>
<rect x="420" y="260" width="20" height="20" fill="#d0dad0"/>
<rect x="360" y="280" width="20" height="20" fill="#dddcdd"/>
<rect x="380" y="280" width="20" height="20" fill="#d6d5d6"/>
<rect x="400" y="280" width="20" height="20" fill="#d8d7d8"/>
<rect x="420" y="280" width="20" height="20" fill="#d4d3d4"/>
<rect x="360" y="300" width="20" height="20" fill="#cbcacb"/>
<rect x="380" y="300" width="20" height="20" fill="#c2c1c2"/>
<rect x="400" y="300" width="20" height="20" fill="#cccbcc"/>
<rect x="420" y="300" width="20" height="20" fill="#c3c2c3"/>
<rect x="360" y="320" width="20" height="20" fill="#d4d4d4"/>
<rect x="380" y="320" width="20" height="20" fill="#c6c6c6"/>
<rect x="400" y="320" width="20" height="20" fill="#d0d0d0"/>
<rect x="420" y="320" width="20" height="20" fill="#c6c6c6"/>
<rect x="360" y="340" width="20" height="20" fill="#d2d2d2"/>
<rect x="380" y="340" width="20" height="20" fill="#c4c3c4"/>
<rect x="400" y="340" width="20" height="20" fill="#cecece"/>
<rect x="420" y="340" width="20" height="20" fill="#c4c4c4"/>
<rect x="360" y="360" width="20" height="20" fill="#c8dcc9"/>
<rect x="380" y="360" width="20" height="20" fill="#c8dcc9"/>
<rect x="400" y="360" width="20" height="20" fill="#c8dcc9"/>
<rect x="420" y="360" width="20" height="20" fill="#c8dcc9"/>
<rect x="360" y="380" width="20" height="20" fill="#cfd6cf"/>
<rect x="380" y="380" width="20" height="20" fill="#cad2ca"/>
<rect x="400" y="380" width="20" height="20" fill="#ccd4cc"/>
<rect x="420" y="380" width="20" height="20" fill="#ccd4cc"/>
<rect x="360" y="400" width="20" height="20" fill="#cdd3cd"/>
<rect x="380" y="400" width="20" height="20" fill="#c8cfc8"/>
<rect x="400" y="400" width="20" height="20" fill="#b8c2b9"/>
<rect x="420" y="400" width="20" height="20" fill="#c5cdc5"/>
<rect x="360" y="420" width="20" height="20" fill="#c6dcc7"/>
<rect x="380" y="420" width="20" height="20" fill="#c6dcc7"/>
<rect x="400" y="420" width="20" height="20" fill="#c6dcc7"/>
<rect x="420" y="420" width="20" height="20" fill="#c6dcc7"/>
<rect x="360" y="440" width="20" height="20" fill="#cbc9cb"/>
<rect x="380" y="440" width="20" height="20" fill="#c6c4c6"/>
<rect x="400" y="440" width="20" height="20" fill="#b9b7b9"/>
<rect x="420" y="440" width="20" height="20" fill="#c3c1c3"/>
<rect x="360" y="460" width="20" height="20" fill="#c0dcc0"/>
<rect x="380" y="460" width="20" height="20" fill="#c0dcc0"/>
<rect x="400" y="460" width="20" height="20" fill="#c0dcc0"/>
<rect x="420" y="460" width="20" height="20" fill="#c0dcc0"/>
<rect x="360" y="480" width="20" height="20" fill="#d3d5d1"/>
<rect x="380" y="480" width="20" height="20" fill="#cacdc9"/>
<rect x="400" y="480" width="20" height="20" fill="#d8dbd6"/>
<rect x="420" y="480" width="20" height="20" fill="#bdc0bc"/>
<rect x="360" y="500" width="20" height="20" fill="#b9c9de"/>
<rect x="380" y="500" width="20" height="20" fill="#bbcade"/>
<rect x="400" y="500" width="20" height="20" fill="#bfcde0"/>
<rect x="420" y="500" width="20" height="20" fill="#c0cde0"/>
<rect x="360" y="520" width="20" height="20" fill="#bccbe0"/>
<rect x="380" y="520" width="20" height="20" fill="#bbcadd"/>
<rect x="400" y="520" width="20" height="20" fill="#c8d6e6"/>
<rect x="420" y="520" width="20" height="20" fill="#bccbdf"/>
<rect x="360" y="540" width="20" height="20" fill="#d1d1d1"/>
<rect x="380" y="540" width="20" height="20" fill="#c8c8c8"/>
<rect x="400" y="540" width="20" height="20" fill="#d3d3d3"/>
<rect x="420" y="540" width="20" height="20" fill="#c6c6c6"/>
<rect x="360" y="560" width="20" height="20" fill="#d2d2d2"/>
<rect x="380" y="560" width="20" height="20" fill="#c9c9c9"/>
<rect x="400" y="560" width="20" height="20" fill="#d6d6d6"/>
<rect x="420" y="560" width="20" height="20" fill="#c5c5c5"/>
<rect x="360" y="580" width="20" height="20" fill="#cacaca"/>
<rect x="380" y="580" width="20" height="20" fill="#c4c4c4"/>
<rect x="400" y="580" width="20" height="20" fill="#d0d0d0"/>
<rect x="420" y="580" width="20" height="20" fill="#c4c4c4"/>
<rect x="360" y="600" width="20" height="20" fill="#dedede"/>
<rect x="380" y="600" width="20" height="20" fill="#d8d8d8"/>
<rect x="400" y="600" width="20" height="20" fill="#e2e2e2"/>
<rect x="420" y="600" width="20" height="20" fill="#c4c4c4"/>
<rect x="360" y="620" width="20" height="20" fill="#dcdcdc"/>
<rect x="380" y="620" width="20" height="20" fill="#d8d8d8"/>
<rect x="400" y="620" width="20" height="20" fill="#dcdcdc"/>
<rect x="420" y="620" width="20" height="20" fill="#dadada"/>
<rect x="360" y="640" width="20" height="20" fill="#dcdcdc"/>
<rect x="380" y="640" width="20" height="20" fill="#d7d7d7"/>
<rect x="400" y="640" width="20" height="20" fill="#e3e3e3"/>
<rect x="420" y="640" width="20" height="20" fill="#d6d6d6"/>
<rect x="360" y="660" width="20" height="20" fill="#cecece"/>
<rect x="380" y="660" width="20" height="20" fill="#c6c6c6"/>
<rect x="400" y="660" width="20" height="20" fill="#d0d0d0"/>
<rect x="420" y="660" width="20" height="20" fill="#c2c2c2"/>
<rect x="360" y="680" width="20" height="20" fill="#d0d0d0"/>
<rect x="380" y="680" width="20" height="20" fill="#c8c8c8"/>
<rect x="400" y="680" width="20" height="20" fill="#d4d4d4"/>
<rect x="420" y="680" width="20" height="20" fill="#c4c4c4"/>
<rect x="360" y="700" width="20" height="20" fill="#cacaca"/>
<rect x="380" y="700" width="20" height="20" fill="#c4c4c4"/>
<rect x="400" y="700" width="20" height="20" fill="#d0d0d0"/>
<rect x="420" y="700" width="20" height="20" fill="#c2c2c2"/>
<rect x="360" y="720" width="20" height="20" fill="#dedede"/>
<rect x="380" y="720" width="20" height="20" fill="#d8d8d8"/>
<rect x="400" y="720" width="20" height="20" fill="#e0e0e0"/>
<rect x="420" y="720" width="20" height="20" fill="#c6c6c6"/>
<rect x="360" y="740" width="20" height="20" fill="#dcdcdc"/>
<rect x="380" y="740" width="20" height="20" fill="#d8d8d8"/>
<rect x="400" y="740" width="20" height="20" fill="#dcdcdc"/>
<rect x="420" y="740" width="20" height="20" fill="#dadada"/>
<rect x="360" y="760" width="20" height="20" fill="#dedede"/>
<rect x="380" y="760" width="20" height="20" fill="#dadada"/>
<rect x="400" y="760" width="20" height="20" fill="#e2e2e2"/>
<rect x="420" y="760" width="20" height="20" fill="#dcdcdc"/>
<rect x="360" y="780" width="20" height="20" fill="#cecece"/>
<rect x="380" y="780" width="20" height="20" fill="#c6c6c6"/>
<rect x="400" y="780" width="20" height="20" fill="#d0d0d0"/>
<rect x="420" y="780" width="20" height="20" fill="#c4c4c4"/>
<rect x="360" y="800" width="20" height="20" fill="#d0d0d0"/>
<rect x="380" y="800" width="20" height="20" fill="#c8c8c8"/>
<rect x="400" y="800" width="20" height="20" fill="#d4d4d4"/>
<rect x="420" y="800" width="20" height="20" fill="#c6c6c6"/>
<rect x="360" y="820" width="20" height="20" fill="#cccccc"/>
<rect x="380" y="820" width="20" height="20" fill="#c5c5c5"/>
<rect x="400" y="820" width="20" height="20" fill="#d1d1d1"/>
<rect x="420" y="820" width="20" height="20" fill="#c4c4c4"/>
<rect x="360" y="840" width="20" height="20" fill="#dedede"/>
<rect x="380" y="840" width="20" height="20" fill="#d8d8d8"/>
<rect x="400" y="840" width="20" height="20" fill="#e2e2e2"/>
<rect x="420" y="840" width="20" height="20" fill="#d8d8d8"/>
<rect x="360" y="860" width="20" height="20" fill="#dcdcdc"/>
<rect x="380" y="860" width="20" height="20" fill="#d8d8d8"/>
<rect x="400" y="860" width="20" height="20" fill="#dcdcdc"/>
<rect x="420" y="860" width="20" height="20" fill="#dadada"/>
<rect x="360" y="880" width="20" height="20" fill="#dedede"/>
<rect x="380" y="880" width="20" height="20" fill="#dadada"/>
<rect x="400" y="880" width="20" height="20" fill="#e4e4e4"/>
<rect x="420" y="880" width="20" height="20" fill="#dcdcdc"/>
<rect x="360" y="900" width="20" height="20" fill="#d4d4d4"/>
<rect x="380" y="900" width="20" height="20" fill="#cbcbcb"/>
<rect x="400" y="900" width="20" height="20" fill="#d6d6d6"/>
<rect x="420" y="900" width="20" height="20" fill="#d0d0d0"/>
</g>
<rect x="405" y="332" width="1" height="26" fill="#fff" opacity="0.7"/>
<rect x="405" y="358" width="1" height="34" fill="#fff" opacity="0.45"/>
<rect x="404" y="326" width="2" height="1" fill="#333"/><rect x="404" y="330" width="2" height="1" fill="#333"/>
<rect x="404" y="350" width="3" height="1" fill="#333"/><rect x="404" y="354" width="3" height="1" fill="#333"/>
</svg><!-- indicator column line -->
<div class="abs" style="left:12px;top:188px;width:1px;height:727px;background:#000;z-index:3"></div>
</body>
</html>
